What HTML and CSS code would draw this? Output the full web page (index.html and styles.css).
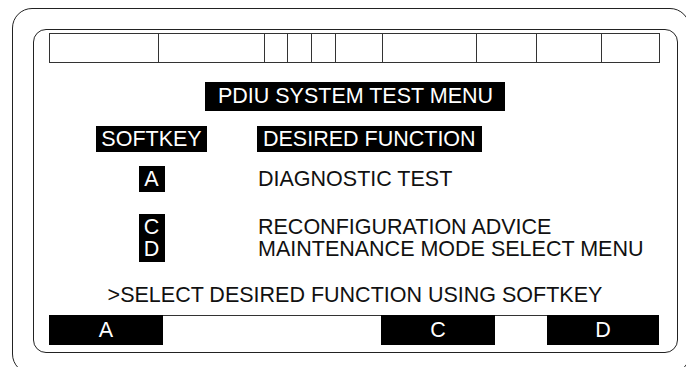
FILE: index.html
```html
<!doctype html>
<html lang="en">

<head>
  <title>PDIU System Test Menu</title>
  <meta charset="utf-8" />
  <link rel="stylesheet" href="styles.css">
</head>

<body>
  <div class="bezel">
    <div class="display">
      <div class="status">
        <span style="width: 109px"></span>
        <span style="width: 106px"></span>
        <span style="width: 23px"></span>
        <span style="width: 24px"></span>
        <span style="width: 24px"></span>
        <span style="width: 47px"></span>
        <span style="width: 94px"></span>
        <span style="width: 60px"></span>
        <span style="width: 65px"></span>
        <span class="last"></span>
      </div>

      <div class="title"><span class="inv">PDIU SYSTEM TEST MENU</span></div>

      <div class="menu">
        <span class="inv head key-col">SOFTKEY</span>
        <span class="inv head">DESIRED FUNCTION</span>

        <span class="key">A</span>
        <span class="func">DIAGNOSTIC TEST</span>

        <span class="key tall">C<br>D</span>
        <span class="func lines">RECONFIGURATION ADVICE<br>MAINTENANCE MODE SELECT MENU</span>
      </div>

      <p class="prompt">&gt;SELECT DESIRED FUNCTION USING SOFTKEY</p>

      <div class="softkeys">
        <span class="soft on" style="width: 114px">A</span>
        <span class="soft" style="width: 218px"></span>
        <span class="soft on" style="width: 114px">C</span>
        <span class="soft" style="width: 52px"></span>
        <span class="soft on" style="width: 112px">D</span>
      </div>
    </div>
  </div>
</body>

</html>
```

FILE: styles.css
```css
html, body {
  margin: 0;
  padding: 0;
  background: #fff;
  overflow: hidden;
}

body {
  width: 686px;
  height: 367px;
  font-family: "Liberation Sans", Arial, sans-serif;
  font-size: 21.5px;
  color: #111;
}

.bezel {
  margin: 8px 0 0 12px;
  width: 678px;
  height: 366px;
  border: 1.5px solid #222;
  border-radius: 20px;
  box-sizing: border-box;
  padding: 19.5px 0 0 19.5px;
}

.display {
  width: 645px;
  height: 324px;
  box-sizing: border-box;
  border: 1.5px solid #222;
  border-radius: 13px;
  padding: 3.5px 15.5px 0 15.5px;
  display: flex;
  flex-direction: column;
}

/* top status line */
.status {
  display: flex;
  width: 611px;
  height: 30px;
  border: 1px solid #333;
  box-sizing: border-box;
}

.status span {
  flex: none;
  box-sizing: border-box;
  border-right: 1px solid #333;
}

.status span.last {
  flex: 1;
  border-right: none;
}

.inv {
  background: #000;
  color: #fff;
}

.title {
  margin-top: 19px;
  text-align: center;
  line-height: 29px;
}

.title .inv {
  display: inline-block;
  padding: 0 12px 0 13px;
}

.menu {
  display: grid;
  grid-template-columns: 111px 1fr;
  grid-template-rows: 26px 26px 48px;
  column-gap: 50px;
  row-gap: 14px;
  margin: 15px 0 0 47px;
}

.head {
  line-height: 26px;
  justify-self: start;
  padding: 0 6px;
}

.head.key-col {
  justify-self: center;
  padding: 0 5px;
}

.key {
  justify-self: center;
  width: 26px;
  text-align: center;
  line-height: 26px;
  background: #000;
  color: #fff;
}

.key.tall {
  margin-top: 8px;
  height: 48px;
  line-height: 22px;
  padding: 2px 0;
  box-sizing: border-box;
}

.func {
  align-self: center;
  padding-left: 1px;
  line-height: 26px;
}

.func.lines {
  align-self: start;
  margin-top: 8px;
  padding-top: 2px;
  line-height: 22px;
}

.prompt {
  margin: 29px 0 0;
  line-height: 24px;
  text-align: center;
}

.softkeys {
  display: flex;
  width: 610px;
  margin-top: 8px;
  border-top: 1px solid #333;
}

.soft {
  flex: none;
  height: 30px;
  line-height: 30px;
  text-align: center;
  margin-top: -1px;
}

.soft.on {
  background: #000;
  color: #fff;
}
```
